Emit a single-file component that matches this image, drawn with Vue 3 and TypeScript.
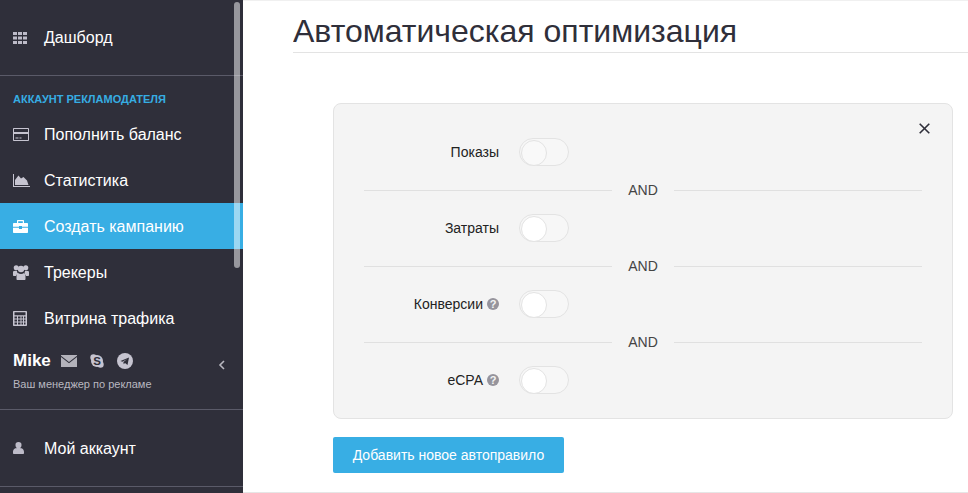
<script setup lang="ts">
const menuTop = [
  { name: 'Пополнить баланс', icon: 'card' },
  { name: 'Статистика', icon: 'chart' },
  { name: 'Создать кампанию', icon: 'case', active: true },
  { name: 'Трекеры', icon: 'users' },
  { name: 'Витрина трафика', icon: 'calc' },
]
const rules = [
  { label: 'Показы', help: false, faded: true },
  { label: 'Затраты', help: false, faded: false },
  { label: 'Конверсии', help: true, faded: false },
  { label: 'eCPA', help: true, faded: false },
]
</script>

<template>
  <div class="page">
    <aside class="sidebar">
      <div class="thumb"></div>
      <div class="dash">
        <svg class="ico" width="14" height="12" viewBox="0 0 14 12">
          <path fill="#bdbbc8" d="M0 0h4v3H0zM5 0h4v3H5zM10 0h4v3h-4zM0 4.500h4v3H0zM5 4.500h4v3H5zM10 4.500h4v3h-4zM0 9h4v3H0zM5 9h4v3H5zM10 9h4v3h-4z" />
        </svg>
        <span>Дашборд</span>
      </div>
      <div class="section">АККАУНТ РЕКЛАМОДАТЕЛЯ</div>
      <div v-for="item in menuTop" :key="item.name" class="item" :class="{ active: item.active }">
        <svg v-if="item.icon == 'card'" class="ico" width="16" height="13" viewBox="0 0 16 13">
          <path fill="#c6c4d0" fill-rule="evenodd" d="M1 0h14c.6 0 1 .4 1 1v11c0 .6-.4 1-1 1H1c-.6 0-1-.4-1-1V1c0-.6.400-1 1-1zM1 1v3h14V1zM1 6v6h14V6zM2.500 9.500h3v1h-3zM6.500 9.500h2v1h-2z" />
        </svg>
        <svg v-else-if="item.icon == 'chart'" class="ico" width="17" height="13" viewBox="0 0 17 13">
          <path fill="#c6c4d0" d="M0 0h1v12h16v1H0zM2 11V6L5.500 1.500 8 4.500 10.500 3 14 6.500l1.500 4.500z" />
        </svg>
        <svg v-else-if="item.icon == 'case'" class="ico" width="15" height="13" viewBox="0 0 15 13">
          <path fill="#fff" fill-rule="evenodd" d="M5 0h5c.6 0 1 .4 1 1v2h3c.6 0 1 .4 1 1v2.800H9V6H6v.8H0V4c0-.6.400-1 1-1h3V1c0-.6.400-1 1-1zM5.200 1.200V3h4.600V1.200zM0 7.800h6V9h3V7.800h6V12c0 .6-.4 1-1 1H1c-.6 0-1-.4-1-1z" />
        </svg>
        <svg v-else-if="item.icon == 'users'" class="ico" width="16" height="15" viewBox="0 0 16 15">
          <g fill="#c6c4d0">
            <circle cx="3.200" cy="2.800" r="2.500" /><circle cx="12.800" cy="2.800" r="2.500" /><circle cx="8" cy="4" r="3.200" />
            <path d="M0 6.500C1 5.500 3 5.500 4 6c0 1 .5 2 1 2.500-1 .5-2 1.500-2 2.500H1c-.6 0-1-.4-1-1zM16 6.500c-1-1-3-1-4-.5 0 1-.5 2-1 2.500 1 .5 2 1.500 2 2.500h2c.6 0 1-.4 1-1zM5 8c1.500 1.200 4.500 1.200 6 0 1 .5 1.500 1.800 1.500 3.500V14c0 .6-.4 1-1 1h-7c-.6 0-1-.4-1-1v-2.500C3.500 9.800 4 8.500 5 8z" />
          </g>
        </svg>
        <svg v-else class="ico" width="14" height="15" viewBox="0 0 14 15">
          <path fill="#c6c4d0" fill-rule="evenodd" d="M1 0h12c.6 0 1 .4 1 1v13c0 .6-.4 1-1 1H1c-.6 0-1-.4-1-1V1c0-.6.400-1 1-1zM1.500 1.200v3h11v-3zM1.500 5.500v2h2.500v-2zM5 5.500v2h2.500v-2zM8.500 5.500v2H10v-2zM11 5.500v2h1.500v-2zM1.500 8.500v2h2.500v-2zM5 8.500v2h2.500v-2zM8.500 8.500v2H10v-2zM11 8.500v2h1.500v-2zM1.500 11.500v2h2.500v-2zM5 11.500v2h2.500v-2zM8.500 11.500v2H10v-2zM11 11.500v2h1.500v-2z" />
        </svg>
        <span>{{ item.name }}</span>
      </div>
      <div class="manager">
        <div class="mgr-top">
          <b>Mike</b>
          <svg class="mail" width="16" height="12" viewBox="0 0 16 12">
            <path fill="#b3b2ba" d="M0 0h16v.8L8 7 0 .8zM0 2v10h16V2L8 8.200z" />
          </svg>
          <svg class="skype" width="14" height="14" viewBox="0 0 14 14">
            <g fill="#c6c4d0">
              <circle cx="7" cy="7" r="6" /><circle cx="3.500" cy="3.500" r="3.200" /><circle cx="10.500" cy="10.500" r="3.200" />
            </g>
            <text x="7" y="11" text-anchor="middle" font-size="11.500" font-weight="700" fill="#2f2f3a" font-family="Liberation Sans">S</text>
          </svg>
          <svg class="tg" width="16" height="16" viewBox="0 0 16 16">
            <circle cx="8" cy="8" r="8" fill="#c6c4d0" />
            <path fill="#2f2f3a" d="M3.500 8l8.500-3.500-1.500 7.500-2.500-2-1.300 1.300-.3-2.300 3.800-3-4.800 2.700z" />
          </svg>
          <svg class="chev" width="7" height="10" viewBox="0 0 7 10">
            <path fill="none" stroke="#b9b8c0" stroke-width="1.600" d="M6 1L2 5l4 4" />
          </svg>
        </div>
        <div class="mgr-sub">Ваш менеджер по рекламе</div>
      </div>
      <div class="account">
        <svg class="ico" width="11" height="12" viewBox="0 0 11 12">
          <path fill="#bdbbc8" d="M5.500 0a3 3 0 0 1 3 3.200c0 1.300-.7 2.400-1.500 2.800 2 .3 4 1 4 4v1c0 .6-.4 1-1 1H1c-.6 0-1-.4-1-1v-1c0-3 2-3.700 4-4-.8-.4-1.500-1.500-1.500-2.800a3 3 0 0 1 3-3.200z" />
        </svg>
        <span>Мой аккаунт</span>
      </div>
    </aside>

    <main class="content">
      <h1 class="title">Автоматическая оптимизация</h1>
      <div class="body">
        <section class="card">
          <svg class="close" width="11" height="11" viewBox="0 0 11 11">
            <path fill="none" stroke="#2f2f3a" stroke-width="1.600" d="M.7.700l9.600 9.600M10.300.700L.7 10.300" />
          </svg>
          <template v-for="(rule, i) in rules" :key="rule.label">
            <div class="rule">
              <div class="rule-label">
                {{ rule.label }}
                <svg v-if="rule.help" class="help" width="12" height="12" viewBox="0 0 12 12">
                  <circle cx="6" cy="6" r="6" fill="#96949c" />
                  <text x="6" y="10" text-anchor="middle" font-size="11" font-weight="700" fill="#f4f4f4" font-family="Liberation Sans">?</text>
                </svg>
              </div>
              <div class="toggle"><div class="knob" :class="{ faded: rule.faded }"></div></div>
            </div>
            <div v-if="i < rules.length - 1" class="and"><span>AND</span></div>
          </template>
        </section>
        <button class="add">Добавить новое автоправило</button>
      </div>
    </main>
  </div>
</template>

<style>
html, body {
  margin: 0;
  background: #fff;
  overflow: hidden;
}
</style>

<style scoped>
.page {
  display: flex;
  width: 968px;
  height: 493px;
  overflow: hidden;
  font-family: "Liberation Sans", Arial, sans-serif;
}

.sidebar {
  position: relative;
  width: 243px;
  flex: none;
  background: #2f2f3a;
  color: #fff;
  font-size: 16px;
}

.thumb {
  position: absolute;
  left: 234px;
  top: 2px;
  width: 6px;
  height: 266px;
  border-radius: 3px;
  background: rgba(255, 255, 255, 0.5);
}

.ico {
  justify-self: start;
}

.dash, .item, .account {
  display: grid;
  grid-template-columns: 31px 1fr;
  align-items: center;
  padding-left: 13px;
}

.dash {
  height: 75px;
  border-bottom: 1px solid #5a5a68;
}

.section {
  padding: 17px 0 0 13px;
  height: 18px;
  font-size: 11px;
  font-weight: 700;
  line-height: 13px;
  color: #36ade3;
}

.item {
  height: 46px;
}

.item span {
  padding-top: 2px;
}

.item.active {
  background: #38aee4;
}

.manager {
  height: 58px;
  padding: 10px 0 0 13px;
  border-bottom: 1px solid #5a5a68;
}

.mgr-top {
  display: flex;
  align-items: center;
  height: 20px;
}

.mgr-top b {
  font-size: 17px;
}

.mail {
  margin-left: 10px;
}

.skype {
  margin-left: 13px;
}

.tg {
  margin-left: 13px;
}

.chev {
  margin-left: 85px;
  margin-top: 7px;
}

.mgr-sub {
  margin-top: 7px;
  font-size: 11px;
  line-height: 13px;
  color: #b9b8c0;
}

.account {
  height: 76px;
  border-bottom: 1px solid #5a5a68;
}

.account span {
  padding-top: 2px;
}

.content {
  flex: 1;
  height: 493px;
  padding-left: 50px;
  border-top: 1px solid #f0f0f0;
  border-bottom: 1px solid #e6e6e6;
  box-sizing: border-box;
  color: #2f2f3a;
}

.title {
  margin: 0;
  height: 51px;
  border-bottom: 1px solid #e3e3e3;
  font-size: 32px;
  font-weight: 400;
  line-height: 60px;
  overflow: hidden;
}

.body {
  padding: 50px 15px 0 40px;
}

.card {
  position: relative;
  height: 316px;
  padding: 34px 30px 0;
  background: #f4f4f4;
  border: 1px solid #e3e3e3;
  border-radius: 8px;
  box-sizing: border-box;
}

.close {
  position: absolute;
  right: 22px;
  top: 19px;
}

.rule {
  display: flex;
  align-items: center;
  height: 28px;
}

.rule-label {
  display: flex;
  align-items: center;
  justify-content: flex-end;
  gap: 4px;
  width: 135px;
  font-size: 14px;
  color: #222;
}

.toggle {
  margin-left: 20px;
  width: 50px;
  height: 28px;
  border: 1px solid #e3e3e3;
  border-radius: 14px;
  background: #f7f7f7;
  box-sizing: border-box;
  padding: 1px;
}

.knob {
  width: 24px;
  height: 24px;
  border: 1px solid #e3e3e3;
  border-radius: 50%;
  background: #fff;
}

.knob.faded {
  background: #f9f9f9;
}

.and {
  display: flex;
  align-items: center;
  height: 48px;
  font-size: 14px;
  color: #444;
}

.and::before, .and::after {
  content: "";
  flex: 1;
  height: 1px;
  background: #e0e0e0;
}

.and span {
  width: 30px;
  margin: 0 16px;
  text-align: center;
  white-space: nowrap;
}

.add {
  display: block;
  margin-top: 18px;
  width: 231px;
  height: 36px;
  padding: 0;
  border: none;
  border-radius: 2px;
  background: #38aee4;
  color: #fff;
  font-family: inherit;
  font-size: 14px;
}
</style>
